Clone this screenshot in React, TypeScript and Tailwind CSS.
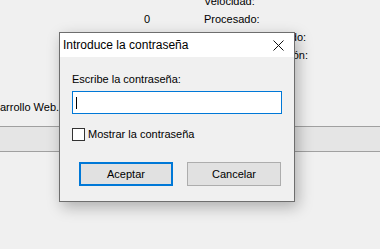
function Background() {
  return (
    <div className="flex h-full flex-col">
      <div className="h-[126px]">
        <div className="-mt-[8px] flex leading-[18px]">
          <div className="w-[204px] pr-[54px] text-right">
            <div>&nbsp;</div>
            <div>0</div>
          </div>
          <div className="flex flex-col">
            <div>Velocidad:</div>
            <div>Procesado:</div>
            <div>Tamaño comprimido:</div>
            <div>Ratio de compresión:</div>
          </div>
        </div>
        <div className="mt-[34px] leading-[18px] whitespace-nowrap">arrollo Web.pdf</div>
      </div>
      <div className="h-[26px] border-y border-[#a0a0a0] bg-[#e5e5e5]" />
    </div>
  );
}

function CloseIcon() {
  return (
    <svg width="11" height="11" viewBox="0 0 11 11" className="text-[#111]">
      <path d="M0.5 0.5 L10.5 10.5 M10.5 0.5 L0.5 10.5" stroke="currentColor" strokeWidth="1" fill="none" />
    </svg>
  );
}

function PasswordDialog() {
  return (
    <div className="absolute left-[59px] top-[32px] flex h-[170px] w-[236px] flex-col border border-[#6e6e6e] bg-[#f0f0f0] shadow-[3px_5px_14px_rgba(0,0,0,0.28)]">
      <div className="flex h-[24px] items-center justify-between bg-white pl-[3px] pr-[10px]">
        <span className="text-[12px] leading-[16px] text-black">Introduce la contraseña</span>
        <CloseIcon />
      </div>
      <div className="flex flex-1 flex-col px-[12px] pt-[14px]">
        <label className="leading-[16px]">Escribe la contraseña:</label>
        <div className="mt-[4px] flex h-[23px] w-[210px] items-center border border-[#0078d7] bg-white pl-[3px]">
          <div className="h-[12px] w-px bg-black" />
        </div>
        <div className="mt-[12px] flex items-center gap-[3px]">
          <div className="h-[13px] w-[13px] border border-[#333] bg-white" />
          <span className="leading-[16px]">Mostrar la contraseña</span>
        </div>
        <div className="mt-[20px] flex gap-[14px] pl-[7px]">
          <button className="h-[24px] w-[94px] border-2 border-[#0078d7] bg-[#e1e1e1] leading-[16px]">
            Aceptar
          </button>
          <button className="h-[24px] w-[94px] border border-[#adadad] bg-[#e1e1e1] leading-[16px]">
            Cancelar
          </button>
        </div>
      </div>
    </div>
  );
}

export default function App() {
  return (
    <div className="relative h-[249px] w-[380px] overflow-hidden bg-[#f0f0f0] font-['Liberation_Sans',Arial,sans-serif] text-[11px] text-black">
      <Background />
      <PasswordDialog />
    </div>
  );
}
